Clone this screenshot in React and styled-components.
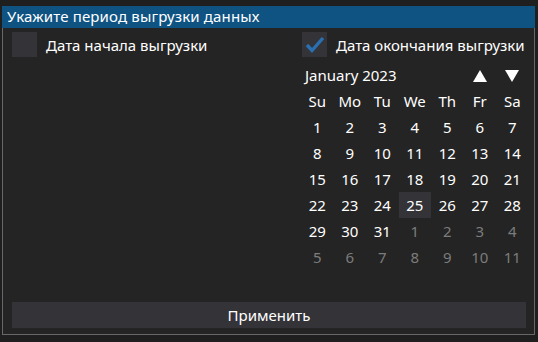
import styled, { createGlobalStyle } from 'styled-components';

const GlobalStyle = createGlobalStyle`
  html, body {
    margin: 0;
    padding: 0;
    background: #1f1f1f;
    font-family: 'Noto Sans', 'Open Sans', sans-serif;
  }
`;

const weekDays = ['Su', 'Mo', 'Tu', 'We', 'Th', 'Fr', 'Sa'];

const buildDays = () => {
  const days = [];
  for (let i = 1; i <= 31; i++) days.push({ n: i, current: true });
  for (let i = 1; i <= 11; i++) days.push({ n: i, current: false });
  return days;
};

const Checkbox = ({ checked }) => (
  <Box>
    {checked && (
      <svg width='25' height='25' viewBox='0 0 25 25'>
        <polyline
          points='5,13 10,18.5 21,6'
          fill='none'
          stroke='#2a6fb0'
          strokeWidth='3.4'
        />
      </svg>
    )}
  </Box>
);

const Arrow = ({ up }) => (
  <svg width='14' height='12' viewBox='0 0 14 12'>
    <polygon points={up ? '7,0 14,12 0,12' : '0,0 14,0 7,12'} fill='#fff' />
  </svg>
);

const App = () => {
  const days = buildDays();

  return (
    <>
      <GlobalStyle />
      <Window>
        <TitleBar>Укажите период выгрузки данных</TitleBar>
        <Body>
          <Columns>
            <Column>
              <CheckRow>
                <Checkbox />
                <Label>Дата начала выгрузки</Label>
              </CheckRow>
            </Column>
            <Column $fill>
              <CheckRow>
                <Checkbox checked />
                <Label>Дата окончания выгрузки</Label>
              </CheckRow>
              <Calendar>
                <Month>January 2023</Month>
                <ArrowCell>
                  <Arrow up />
                </ArrowCell>
                <ArrowCell>
                  <Arrow />
                </ArrowCell>
                {weekDays.map((d) => (
                  <Cell key={d}>{d}</Cell>
                ))}
                {days.map((d, i) => (
                  <Cell
                    key={i}
                    $muted={!d.current}
                    $selected={d.current && d.n === 25}
                  >
                    {d.n}
                  </Cell>
                ))}
              </Calendar>
            </Column>
          </Columns>
          <Button>Применить</Button>
        </Body>
      </Window>
    </>
  );
};

const Window = styled.div`
  margin: 6px 0 0 2px;
  width: 533px;
  height: 329px;
  box-sizing: border-box;
  display: flex;
  flex-direction: column;
  background: #242424;
  border: 1px solid #686868;
  border-top: none;
`;

const TitleBar = styled.div`
  height: 22px;
  margin: 0 -1px;
  padding-left: 5px;
  background: #0f5382;
  color: #fff;
  font-size: 15px;
  letter-spacing: 0.15px;
  line-height: 21px;
  white-space: nowrap;
`;

const Body = styled.div`
  flex: 1;
  display: flex;
  flex-direction: column;
  justify-content: space-between;
  padding: 4px 7px 6px 9px;
`;

const Columns = styled.div`
  display: flex;
`;

const Column = styled.div`
  flex: ${({ $fill }) => ($fill ? '1 1 auto' : '0 0 290px')};
  min-width: 0;
`;

const CheckRow = styled.div`
  display: flex;
  align-items: center;
  gap: 9px;
  height: 25px;
`;

const Box = styled.div`
  width: 25px;
  height: 25px;
  background: #333338;
  flex-shrink: 0;

  svg {
    display: block;
  }
`;

const Label = styled.span`
  color: #fff;
  font-size: 15px;
  white-space: nowrap;
`;

const Calendar = styled.div`
  margin-top: 5px;
  margin-left: -1px;
  display: grid;
  grid-template-columns: repeat(7, 32.5px);
  grid-auto-rows: 26px;
`;

const Month = styled.div`
  grid-column: 1 / span 5;
  display: flex;
  align-items: center;
  padding-left: 4px;
  color: #fff;
  font-size: 15px;
`;

const ArrowCell = styled.div`
  display: flex;
  align-items: center;
  justify-content: center;
  padding-top: 1px;
`;

const Cell = styled.div`
  display: flex;
  align-items: center;
  justify-content: center;
  font-size: 15px;
  color: ${({ $muted }) => ($muted ? '#7c7c7c' : '#fff')};
  background: ${({ $selected }) => ($selected ? '#333338' : 'transparent')};
`;

const Button = styled.div`
  height: 26px;
  margin-right: 1px;
  display: flex;
  align-items: center;
  justify-content: center;
  background: #333338;
  color: #fff;
  font-size: 15px;
`;

export default App;
